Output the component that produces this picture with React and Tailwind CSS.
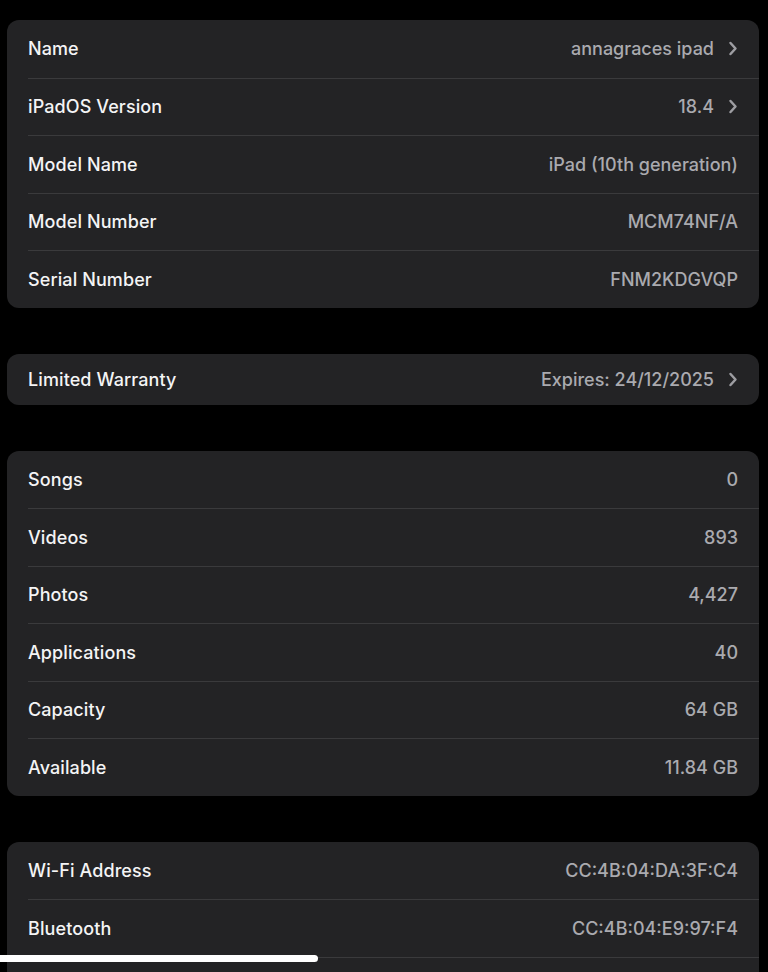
import React from "react";

const Chevron = () => (
  <svg width="10" height="15" viewBox="0 0 10 15" className="ml-[14px] shrink-0" fill="none">
    <path d="M2.5 2 L7.5 7.5 L2.5 13" stroke="#9d9da2" strokeWidth="2.5" strokeLinecap="round" strokeLinejoin="round" />
  </svg>
);

const Row = ({ label, value, chevron, first, h = "h-[57.5px]" }) => (
  <div className={`pl-[21px] ${h}`}>
    <div className={`flex items-center h-full pr-[21px] ${first ? "" : "border-t border-[#3a3a3c]"}`}>
      <span className="text-[18px] font-medium text-[#f4f4f5] tracking-[0.1px]">{label}</span>
      <span className="ml-auto flex items-center text-[18px] font-medium text-[#aaaaaf]">
        {value}
        {chevron && <Chevron />}
      </span>
    </div>
  </div>
);

const Card = ({ rows, h }) => (
  <div className="shrink-0 bg-[#232325] rounded-[12px] overflow-hidden">
    {rows.map((r, i) => (
      <Row key={i} {...r} first={i === 0} h={h} />
    ))}
  </div>
);

export default function App() {
  return (
    <div
      className="bg-black h-[972px] overflow-hidden relative pl-[7px] pr-[9px] pt-[20px] flex flex-col gap-[46px]"
      style={{ fontFamily: "Inter, 'Noto Sans', sans-serif" }}
    >
      <Card
        rows={[
          { label: "Name", value: "annagraces ipad", chevron: true },
          { label: "iPadOS Version", value: "18.4", chevron: true },
          { label: "Model Name", value: "iPad (10th generation)" },
          { label: "Model Number", value: "MCM74NF/A" },
          { label: "Serial Number", value: "FNM2KDGVQP" },
        ]}
      />
      <Card h="h-[51px]" rows={[{ label: "Limited Warranty", value: "Expires: 24/12/2025", chevron: true }]} />
      <Card
        rows={[
          { label: "Songs", value: "0" },
          { label: "Videos", value: "893" },
          { label: "Photos", value: "4,427" },
          { label: "Applications", value: "40" },
          { label: "Capacity", value: "64 GB" },
          { label: "Available", value: "11.84 GB" },
        ]}
      />
      <Card
        rows={[
          { label: "Wi-Fi Address", value: "CC:4B:04:DA:3F:C4" },
          { label: "Bluetooth", value: "CC:4B:04:E9:97:F4" },
          { label: "", value: "" },
        ]}
      />
      <div className="absolute left-0 top-[955px] w-[318px] h-[7px] bg-white rounded-r-full" />
    </div>
  );
}
